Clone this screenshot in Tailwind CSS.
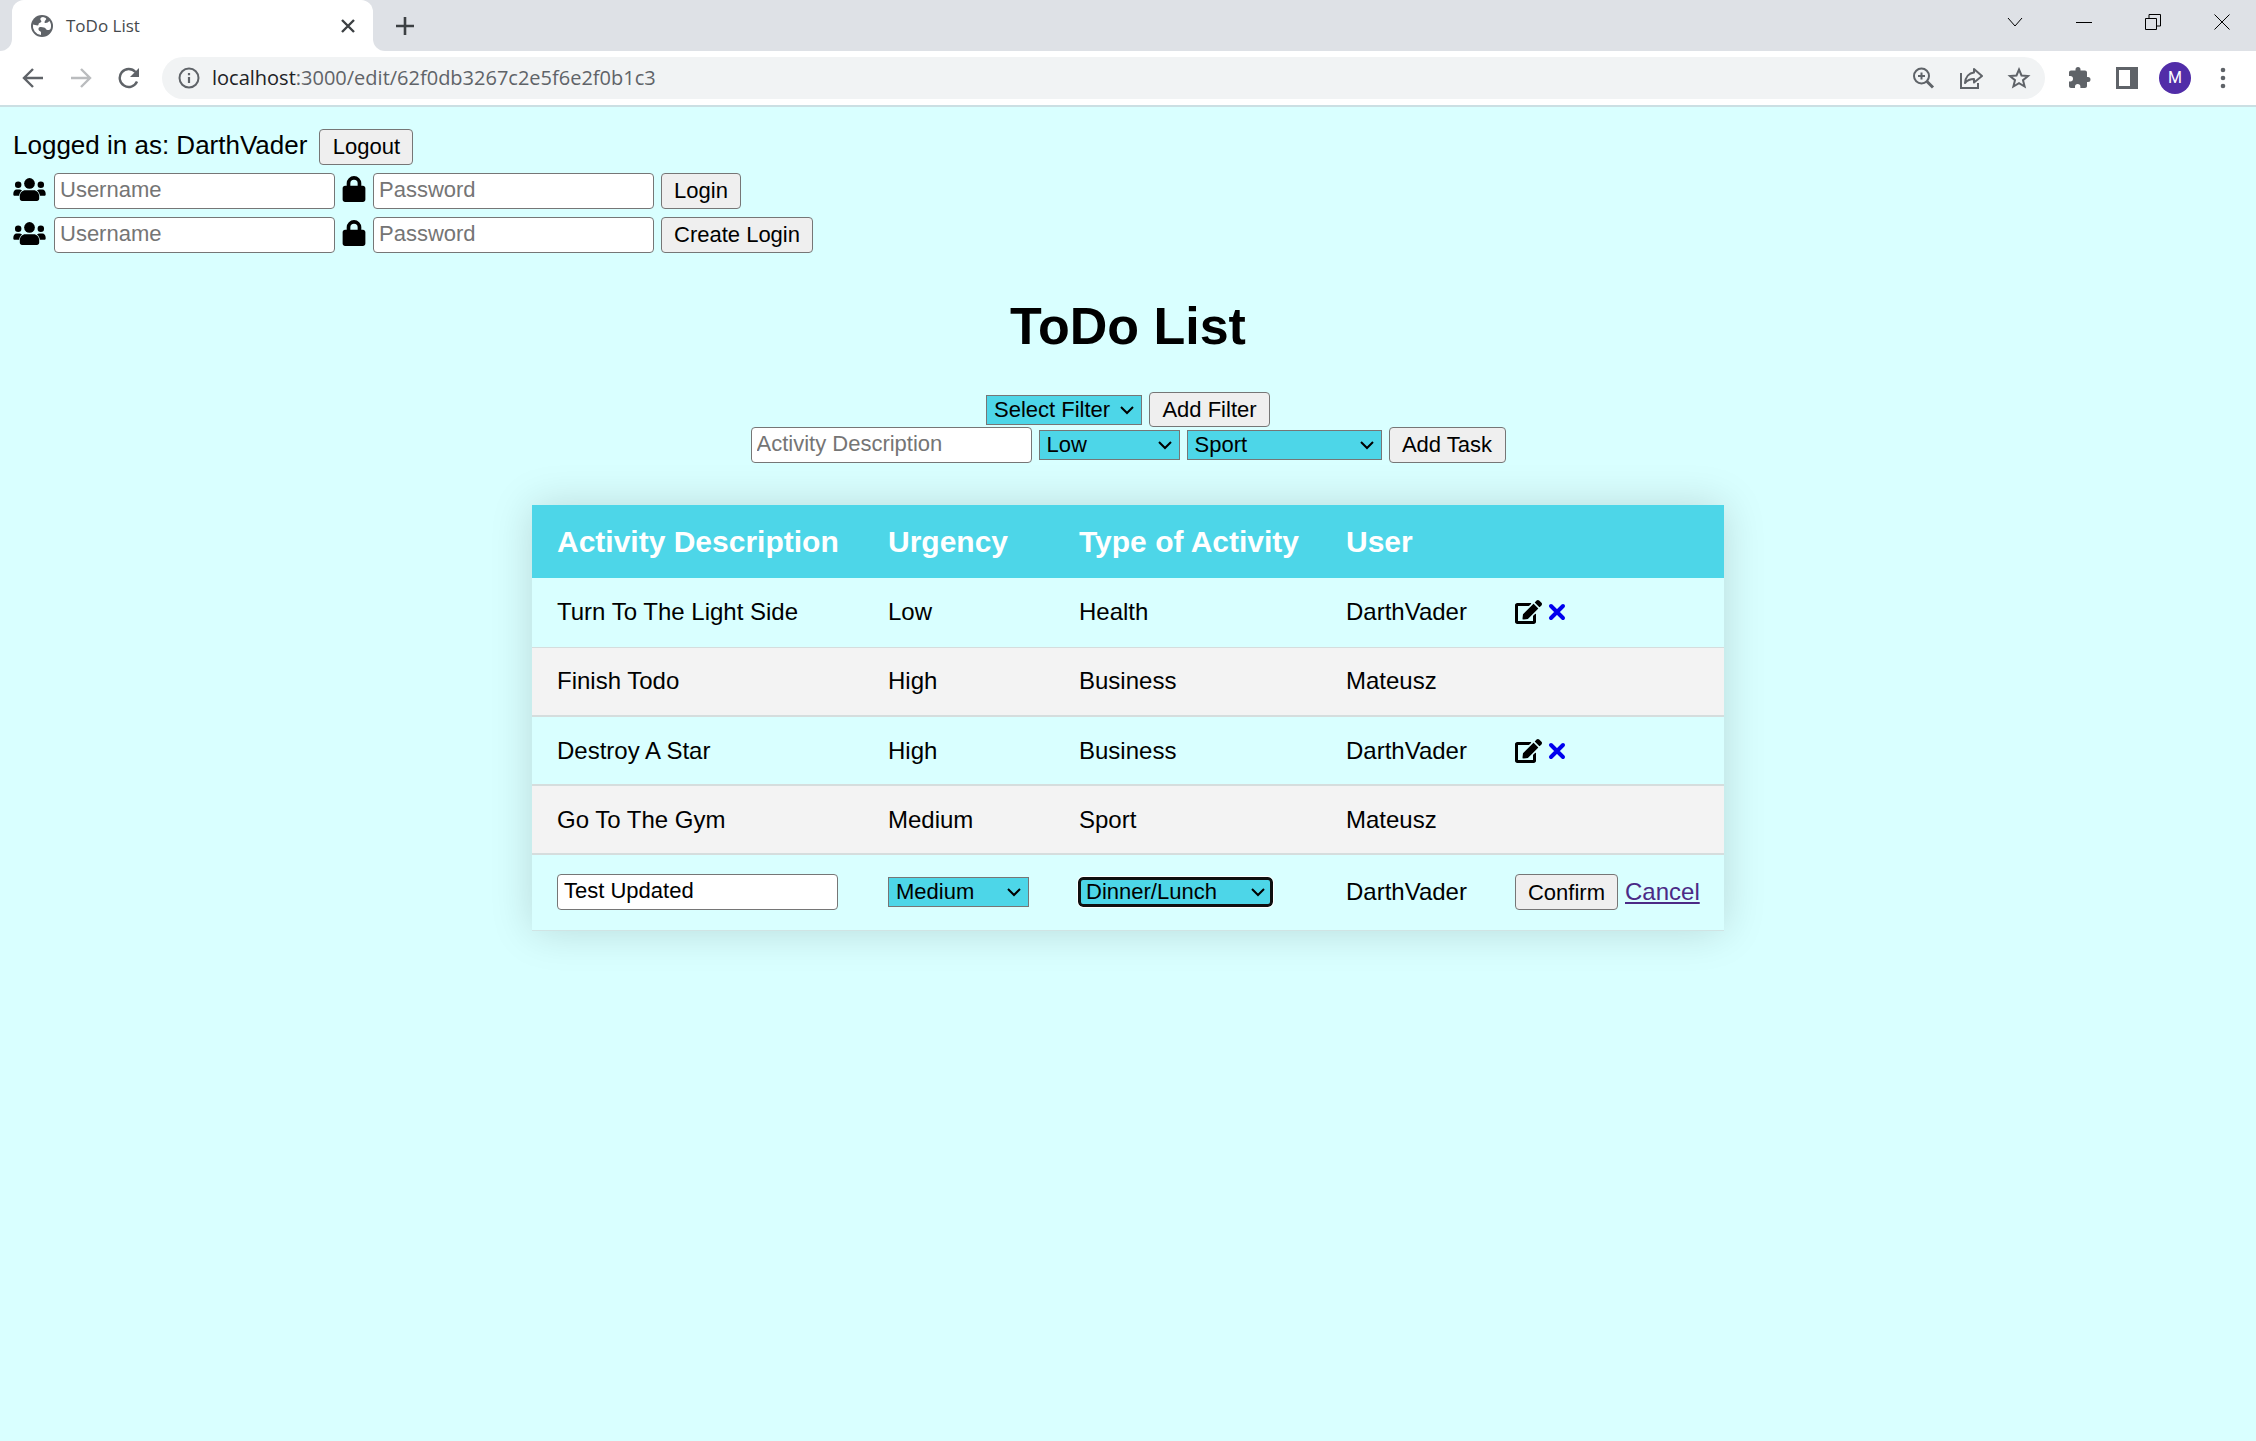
<!DOCTYPE html>
<html lang="en">
<head>
<meta charset="utf-8">
<title>ToDo List</title>
<script src="https://cdn.jsdelivr.net/npm/@tailwindcss/browser@4"></script>
</head>
<body class="flex min-h-screen flex-col bg-[#d9ffff] font-['Liberation_Sans',Arial,sans-serif] text-black">

<svg class="hidden" aria-hidden="true">
  <symbol id="users" viewBox="0 0 640 455"><circle cx="320" cy="108" r="106"/><circle cx="96" cy="132" r="64"/><circle cx="544" cy="132" r="64"/><path d="M64 228h56c20 0 38 6 52 17-32 26-52 62-58 108H26c-15 0-26-11-26-26v-16c0-46 29-83 64-83zM520 228h56c35 0 64 37 64 83v16c0 15-11 26-26 26h-88c-6-46-26-82-58-108 14-11 32-17 52-17zM240 244h160c62 0 112 52 112 118v49c0 24-20 44-44 44H172c-24 0-44-20-44-44v-49c0-66 50-118 112-118z"/></symbol>
  <symbol id="lock" viewBox="0 0 448 512"><path fill-rule="evenodd" d="M80 192v-48a144 144 0 0 1 288 0v48h32c26 0 48 22 48 48v224c0 26-22 48-48 48H48c-26 0-48-22-48-48V240c0-26 22-48 48-48h32zm72 0h144v-48a72 72 0 0 0-144 0v48z"/></symbol>
  <symbol id="edit" viewBox="0 0 576 512"><path d="M402.600 83.200l90.200 90.200c3.800 3.800 3.800 10 0 13.800L274.400 405.600l-92.800 10.300c-12.400 1.400-22.900-9.100-21.500-21.500l10.300-92.800L388.800 83.200c3.800-3.800 10-3.800 13.800 0zm162-22.900l-48.800-48.800c-15.200-15.200-39.900-15.200-55.200 0l-35.400 35.400c-3.800 3.800-3.800 10 0 13.800l90.200 90.200c3.800 3.800 10 3.800 13.800 0l35.400-35.400c15.200-15.300 15.200-40 0-55.200zM384 346.200V448H64V128h229.800c3.200 0 6.200-1.300 8.500-3.500l40-40c7.600-7.600 2.200-20.500-8.500-20.500H48C21.500 64 0 85.500 0 112v352c0 26.500 21.500 48 48 48h352c26.500 0 48-21.500 48-48V306.200c0-10.700-12.900-16-20.500-8.500l-40 40c-2.200 2.300-3.500 5.300-3.500 8.500z"/></symbol>
  <symbol id="cross" viewBox="0 0 18 18"><path d="M3 3l12 12M15 3L3 15" fill="none" stroke="currentColor" stroke-width="4" stroke-linecap="round"/></symbol>
  <symbol id="caret" viewBox="0 0 16 16"><path d="M2 5l6 6 6-6" fill="none" stroke="currentColor" stroke-width="2"/></symbol>
</svg>

<header class="font-['Open_Sans','Noto_Sans',sans-serif] text-[#5f6368]">
  <div class="flex h-[51px] items-stretch bg-[#dee1e6]">
    <div class="w-3 bg-white"><div class="h-full rounded-br-xl bg-[#dee1e6]"></div></div>
    <div class="flex w-[361px] items-center rounded-t-xl bg-white pr-4 pl-[19px]">
      <svg class="size-[22px]" viewBox="0 0 22 22"><circle cx="11" cy="11" r="11" fill="currentColor"/><path d="M12 2c-3 .5-3 2.500-2 3.500s0 2-1.500 2.500S8 10.500 6.500 10.500 3 9.500 2 9.500A9 9 0 0 0 10 20v-3c-1-1-3-1.500-2.500-3.500S11 12 13 12.500s2 2.500 3.500 2.500 2 0 3-1A9 9 0 0 0 18.500 6C17 7 16.500 8 14.500 8S14 5.500 15 4.500 14 2.500 12 2z" fill="#fff"/></svg>
      <span class="ml-[13px] text-[17px] leading-6 text-[#45494d]">ToDo List</span>
      <button class="ml-auto flex size-[18px] items-center justify-center text-[#3c4043]" aria-label="Close tab"><svg class="size-[14px]" viewBox="0 0 14 14"><path d="M1 1l12 12M13 1L1 13" stroke="currentColor" stroke-width="2.400"/></svg></button>
    </div>
    <div class="w-3 bg-white"><div class="h-full rounded-bl-xl bg-[#dee1e6]"></div></div>
    <button class="ml-[11px] text-[#3c4043]" aria-label="New tab"><svg class="size-[18px]" viewBox="0 0 18 18"><path d="M9 0v18M0 9h18" stroke="currentColor" stroke-width="2.600"/></svg></button>
    <div class="ml-auto flex h-[43px] items-center gap-[53px] pr-[26px] text-black">
      <button aria-label="Search tabs"><svg class="size-4" viewBox="0 0 16 16"><path d="M1 4l7 8 7-8" fill="none" stroke="currentColor"/></svg></button>
      <button aria-label="Minimize"><svg class="size-4" viewBox="0 0 16 16"><path d="M0 8.500h16" stroke="currentColor"/></svg></button>
      <button aria-label="Restore"><svg class="size-4" viewBox="0 0 16 16"><path d="M.5 4.500h11v11H.5zM4 4V.5h11.500V12H12" fill="none" stroke="currentColor"/></svg></button>
      <button aria-label="Close"><svg class="size-4" viewBox="0 0 16 16"><path d="M.5.5l15 15M15.500.5l-15 15" stroke="currentColor"/></svg></button>
    </div>
  </div>
  <div class="flex h-14 items-center border-b-2 border-[#cbdfe3] bg-white pr-[21px] pl-[22px]">
    <div class="flex items-center gap-[26px]">
      <button aria-label="Back"><svg class="size-[22px]" viewBox="0 0 22 22"><path d="M21 11H3M11 2l-9 9 9 9" fill="none" stroke="currentColor" stroke-width="2.400"/></svg></button>
      <button aria-label="Forward" class="text-[#babcbe]"><svg class="size-[22px]" viewBox="0 0 22 22"><path d="M1 11h18M11 2l9 9-9 9" fill="none" stroke="currentColor" stroke-width="2.400"/></svg></button>
      <button aria-label="Reload"><svg class="size-[22px]" viewBox="0 0 22 22"><path d="M19 14.500A9 9 0 1 1 17.500 5" fill="none" stroke="currentColor" stroke-width="2.400"/><path d="M21 1v9h-9z" fill="currentColor"/></svg></button>
    </div>
    <div class="ml-[22px] flex h-[42px] flex-1 items-center rounded-full bg-[#f1f3f4] pr-[14px] pl-4">
      <svg class="size-[22px]" viewBox="0 0 22 22"><circle cx="11" cy="11" r="9.500" fill="none" stroke="currentColor" stroke-width="2"/><path d="M11 10v6M11 6v2.200" stroke="currentColor" stroke-width="2.200"/></svg>
      <span class="ml-3 text-xl leading-7"><span class="text-[#202124]">localhost</span>:3000/edit/62f0db3267c2e5f6e2f0b1c3</span>
      <div class="ml-auto flex items-center gap-6">
        <svg class="size-6" viewBox="0 0 24 24" fill="none" stroke="currentColor" stroke-width="2"><circle cx="10.500" cy="10" r="7.500"/><path d="M16 15.500l6 6" stroke-width="3"/><path d="M10.500 6.500v7M7 10h7"/></svg>
        <svg class="size-6" viewBox="0 0 24 24" fill="none" stroke="currentColor" stroke-width="2"><path d="M2 7v15h17v-5"/><path d="M15 3l8 7-8 6.500V13c-4 0-6.500 1-9 4 .5-6 4-10 9-10.500z" stroke-linejoin="round"/></svg>
        <svg class="size-6" viewBox="0 0 24 24" fill="none" stroke="currentColor" stroke-width="2"><path d="M12 3.500l2.500 6 6.500.5-5 4.200 1.600 6.300-5.600-3.400-5.600 3.400L8 14.200 3 10l6.500-.5z"/></svg>
      </div>
    </div>
    <div class="ml-[22px] flex items-center gap-6">
      <svg class="size-6" viewBox="0 0 24 24" fill="currentColor"><path d="M21 11h-1V6.500c0-1.100-.9-2-2-2h-4.500V3.500a2.500 2.500 0 0 0-5 0v1H4c-1.100 0-2 .9-2 2V10h1.300a2.700 2.700 0 0 1 0 5.400H2V20c0 1.100.9 2 2 2h4v-1.300a2.700 2.700 0 0 1 5.400 0V22H18c1.100 0 2-.9 2-2v-4h1a2.500 2.500 0 0 0 0-5z"/></svg>
      <svg class="size-6" viewBox="0 0 24 24"><path fill-rule="evenodd" d="M1 1h22v22H1zM4 4v16h11V4z" fill="currentColor"/></svg>
      <div class="-mx-1 flex size-8 items-center justify-center rounded-full bg-[#512da8] font-['Roboto',sans-serif] text-base text-white">M</div>
      <svg class="size-6" viewBox="0 0 24 24" fill="currentColor"><circle cx="12" cy="4" r="2.300"/><circle cx="12" cy="12" r="2.300"/><circle cx="12" cy="20" r="2.300"/></svg>
    </div>
  </div>
</header>

<main class="text-[22px] leading-7">
  <section class="flex flex-col gap-2 px-[13px] pt-[22px]">
    <div class="flex items-center gap-3">
      <p class="pb-1 text-[26px] leading-8">Logged in as: DarthVader</p>
      <button class="h-9 w-[94px] rounded-[4px] border border-[#767676] bg-[#efefef]">Logout</button>
    </div>
    <form class="flex items-center gap-[7px]">
      <label for="login-user" class="pb-1" aria-label="Username"><svg class="mr-px h-[23px] w-[33px]"><use href="#users"/></svg></label>
      <input id="login-user" placeholder="Username" class="h-9 w-[281px] rounded-[4px] border border-[#767676] bg-white px-[5px] pb-0.5 placeholder:text-[#757575]">
      <label for="login-pass" class="pb-1" aria-label="Password"><svg class="h-[26px] w-6"><use href="#lock"/></svg></label>
      <input id="login-pass" type="password" placeholder="Password" class="h-9 w-[281px] rounded-[4px] border border-[#767676] bg-white px-[5px] pb-0.5 placeholder:text-[#757575]">
      <button type="button" class="h-9 w-20 rounded-[4px] border border-[#767676] bg-[#efefef]">Login</button>
    </form>
    <form class="flex items-center gap-[7px]">
      <label for="new-user" class="pb-1" aria-label="Username"><svg class="mr-px h-[23px] w-[33px]"><use href="#users"/></svg></label>
      <input id="new-user" placeholder="Username" class="h-9 w-[281px] rounded-[4px] border border-[#767676] bg-white px-[5px] pb-0.5 placeholder:text-[#757575]">
      <label for="new-pass" class="pb-1" aria-label="Password"><svg class="h-[26px] w-6"><use href="#lock"/></svg></label>
      <input id="new-pass" type="password" placeholder="Password" class="h-9 w-[281px] rounded-[4px] border border-[#767676] bg-white px-[5px] pb-0.5 placeholder:text-[#757575]">
      <button type="button" class="h-9 w-[152px] rounded-[4px] border border-[#767676] bg-[#efefef]">Create Login</button>
    </form>
  </section>

  <h1 class="mt-[43px] text-center text-[52px] leading-[60px] font-bold">ToDo List</h1>

  <section class="mt-9 flex flex-col items-center">
    <form class="flex items-center gap-[7px]">
      <div class="grid items-center">
        <select aria-label="Filter" class="col-start-1 row-start-1 h-[30px] w-[156px] appearance-none border border-[#767676] bg-[#4dd6e8] px-[7px] leading-7"><option>Select Filter</option></select>
        <svg class="pointer-events-none col-start-1 row-start-1 mr-[7px] size-4 justify-self-end"><use href="#caret"/></svg>
      </div>
      <button type="button" class="h-[35px] w-[121px] rounded-[4px] border border-[#767676] bg-[#efefef]">Add Filter</button>
    </form>
    <form class="flex items-center gap-[7px]">
      <input aria-label="Activity Description" placeholder="Activity Description" class="h-9 w-[281px] rounded-[4px] border border-[#767676] bg-white px-[5px] pb-0.5 placeholder:text-[#757575]">
      <div class="grid items-center">
        <select aria-label="Urgency" class="col-start-1 row-start-1 h-[30px] w-[141px] appearance-none border border-[#767676] bg-[#4dd6e8] px-[7px] leading-7"><option>Low</option><option>Medium</option><option>High</option></select>
        <svg class="pointer-events-none col-start-1 row-start-1 mr-[7px] size-4 justify-self-end"><use href="#caret"/></svg>
      </div>
      <div class="grid items-center">
        <select aria-label="Type of activity" class="col-start-1 row-start-1 h-[30px] w-[195px] appearance-none border border-[#767676] bg-[#4dd6e8] px-[7px] leading-7"><option>Sport</option><option>Health</option><option>Business</option><option>Dinner/Lunch</option></select>
        <svg class="pointer-events-none col-start-1 row-start-1 mr-[7px] size-4 justify-self-end"><use href="#caret"/></svg>
      </div>
      <button type="button" class="h-9 w-[117px] rounded-[4px] border border-[#767676] bg-[#efefef]">Add Task</button>
    </form>
  </section>

  <table class="mx-auto mt-[42px] mb-11 w-[1192px] table-fixed text-left text-2xl whitespace-nowrap shadow-[0_0_40px_rgba(0,0,0,0.15)]">
    <thead>
      <tr class="h-[73px] bg-[#4dd6e8] text-[30px] leading-9 text-white">
        <th class="w-[331px] pl-[25px]">Activity Description</th>
        <th class="w-[191px] pl-[25px]">Urgency</th>
        <th class="w-[267px] pl-[25px]">Type of Activity</th>
        <th class="w-[169px] pl-[25px]">User</th>
        <th class="w-[234px] pl-[25px]"></th>
      </tr>
    </thead>
    <tbody>
      <tr class="h-[69px] border-b border-[#d5dddd] bg-[#d9ffff]">
        <td class="pl-[25px]">Turn To The Light Side</td><td class="pl-[25px]">Low</td><td class="pl-[25px]">Health</td><td class="pl-[25px]">DarthVader</td>
        <td class="pl-[25px]"><div class="flex items-center gap-1.5"><a href="#" aria-label="Edit"><svg class="h-6 w-[27px]"><use href="#edit"/></svg></a><a href="#" aria-label="Delete" class="text-[#0000ee]"><svg class="size-[18px]"><use href="#cross"/></svg></a></div></td>
      </tr>
      <tr class="h-[69px] border-b-2 border-[#d5dddd] bg-[#f3f3f3]">
        <td class="pl-[25px]">Finish Todo</td><td class="pl-[25px]">High</td><td class="pl-[25px]">Business</td><td class="pl-[25px]">Mateusz</td><td></td>
      </tr>
      <tr class="h-[69px] border-b-2 border-[#d5dddd] bg-[#d9ffff]">
        <td class="pl-[25px]">Destroy A Star</td><td class="pl-[25px]">High</td><td class="pl-[25px]">Business</td><td class="pl-[25px]">DarthVader</td>
        <td class="pl-[25px]"><div class="flex items-center gap-1.5"><a href="#" aria-label="Edit"><svg class="h-6 w-[27px]"><use href="#edit"/></svg></a><a href="#" aria-label="Delete" class="text-[#0000ee]"><svg class="size-[18px]"><use href="#cross"/></svg></a></div></td>
      </tr>
      <tr class="h-[69px] border-b-2 border-[#d5dddd] bg-[#f3f3f3]">
        <td class="pl-[25px]">Go To The Gym</td><td class="pl-[25px]">Medium</td><td class="pl-[25px]">Sport</td><td class="pl-[25px]">Mateusz</td><td></td>
      </tr>
      <tr class="h-[76px] border-b border-[#d0e4e4] bg-[#d9ffff]">
        <td class="pl-[25px]"><input aria-label="Activity description" value="Test Updated" class="block h-9 w-[281px] rounded-[4px] border border-[#767676] bg-white px-1.5 pb-0.5 text-[22px]"></td>
        <td class="pl-[25px]">
          <div class="grid w-[141px] items-center text-[22px]">
            <select aria-label="Urgency" class="col-start-1 row-start-1 h-[30px] w-full appearance-none border border-[#767676] bg-[#4dd6e8] px-[7px] leading-7"><option>Medium</option><option>Low</option><option>High</option></select>
            <svg class="pointer-events-none col-start-1 row-start-1 mr-[7px] size-4 justify-self-end"><use href="#caret"/></svg>
          </div>
        </td>
        <td class="pl-6">
          <div class="grid w-[195px] items-center text-[22px]">
            <select aria-label="Type of activity" class="col-start-1 row-start-1 h-[30px] w-full appearance-none rounded-[5px] border-[3px] border-[#101010] bg-[#4dd6e8] px-[5px] leading-6 outline outline-white"><option>Dinner/Lunch</option><option>Sport</option><option>Health</option><option>Business</option></select>
            <svg class="pointer-events-none col-start-1 row-start-1 mr-[7px] size-4 justify-self-end"><use href="#caret"/></svg>
          </div>
        </td>
        <td class="pl-[25px]">DarthVader</td>
        <td class="pl-[25px]"><div class="flex items-center gap-[7px]"><button class="h-9 w-[103px] rounded-[4px] border border-[#767676] bg-[#efefef] text-[22px]">Confirm</button><a href="#" class="text-[#4b2a86] underline">Cancel</a></div></td>
      </tr>
    </tbody>
  </table>
</main>
</body>
</html>
